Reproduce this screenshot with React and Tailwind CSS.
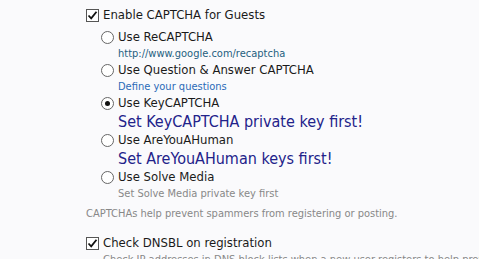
import React from "react";

function Check() {
  return (
    <span className="w-[13px] h-[13px] border border-[#555] bg-white flex items-center justify-center shrink-0">
      <svg width="11" height="11" viewBox="0 0 11 11">
        <path d="M1.5 5.5 L4.2 8.3 L9.5 1.8" stroke="#111" strokeWidth="1.8" fill="none" />
      </svg>
    </span>
  );
}

function Radio({ checked }) {
  return (
    <span className="w-[13px] h-[13px] rounded-full border border-[#666] bg-white flex items-center justify-center shrink-0">
      {checked && <span className="w-[5px] h-[5px] rounded-full bg-[#111]" />}
    </span>
  );
}

function Opt({ checked, label, children }) {
  return (
    <div className="flex flex-col">
      <div className="flex items-center gap-[4px] h-[18px]">
        <Radio checked={checked} />
        <span className="text-[13px] text-[#1a1a1a]">{label}</span>
      </div>
      <div className="pl-[17px]">{children}</div>
    </div>
  );
}

export default function App() {
  return (
    <div className="w-[479px] h-[259px] overflow-hidden bg-[#fafafc] pl-[86px] pt-[6px]" style={{ fontFamily: '"DejaVu Sans Condensed", "DejaVu Sans", sans-serif' }}>
      <div className="flex items-center gap-[4px] h-[18px]">
        <Check />
        <span className="text-[13px] text-[#1a1a1a]">Enable CAPTCHA for Guests</span>
      </div>
      <div className="pl-[15px] pt-[4px] flex flex-col">
        <Opt label="Use ReCAPTCHA">
          <div className="text-[11px] text-[#1f5f80] leading-[15px]">http://www.google.com/recaptcha</div>
        </Opt>
        <Opt label="Use Question &amp; Answer CAPTCHA">
          <div className="text-[11px] text-[#2a6ab8] leading-[15px]">Define your questions</div>
        </Opt>
        <Opt checked label="Use KeyCAPTCHA">
          <div className="text-[16px] text-[#22228a] leading-[19px]">Set KeyCAPTCHA private key first!</div>
        </Opt>
        <Opt label="Use AreYouAHuman">
          <div className="text-[16px] text-[#22228a] leading-[19px]">Set AreYouAHuman keys first!</div>
        </Opt>
        <Opt label="Use Solve Media">
          <div className="text-[11px] text-[#888] leading-[15px]">Set Solve Media private key first</div>
        </Opt>
      </div>
      <div className="text-[11px] text-[#888] mt-[5px] leading-[15px]">CAPTCHAs help prevent spammers from registering or posting.</div>
      <div className="flex items-center gap-[4px] h-[18px] mt-[13px]">
        <Check />
        <span className="text-[13px] text-[#1a1a1a]">Check DNSBL on registration</span>
      </div>
      <div className="text-[11px] text-[#888] pl-[17px] leading-[15px] whitespace-nowrap">Check IP addresses in DNS block lists when a new user registers to help prevent spam.</div>
    </div>
  );
}
